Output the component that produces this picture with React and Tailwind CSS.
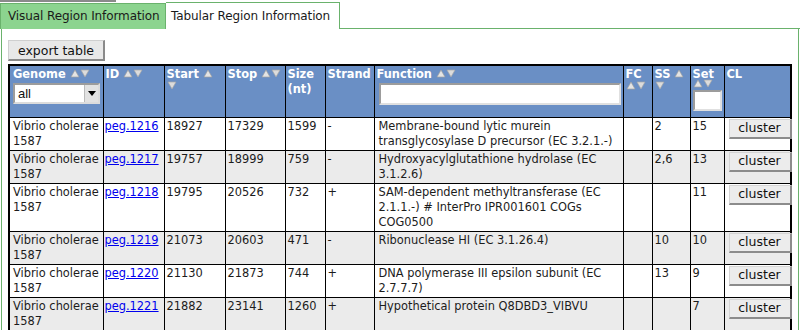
import React from 'react';

const rows = [
  { id: 'peg.1216', start: '18927', stop: '17329', size: '1599', strand: '-', fn: 'Membrane-bound lytic murein transglycosylase D precursor (EC 3.2.1.-)', fc: '', ss: '2', set: '15' },
  { id: 'peg.1217', start: '19757', stop: '18999', size: '759', strand: '-', fn: 'Hydroxyacylglutathione hydrolase (EC 3.1.2.6)', fc: '', ss: '2,6', set: '13' },
  { id: 'peg.1218', start: '19795', stop: '20526', size: '732', strand: '+', fn: 'SAM-dependent methyltransferase (EC 2.1.1.-) # InterPro IPR001601 COGs COG0500', fc: '', ss: '', set: '11' },
  { id: 'peg.1219', start: '21073', stop: '20603', size: '471', strand: '-', fn: 'Ribonuclease HI (EC 3.1.26.4)', fc: '', ss: '10', set: '10' },
  { id: 'peg.1220', start: '21130', stop: '21873', size: '744', strand: '+', fn: 'DNA polymerase III epsilon subunit (EC 2.7.7.7)', fc: '', ss: '13', set: '9' },
  { id: 'peg.1221', start: '21882', stop: '23141', size: '1260', strand: '+', fn: 'Hypothetical protein Q8DBD3_VIBVU', fc: '', ss: '', set: '7' },
];

const Up = () => (
  <svg width="10" height="9" viewBox="0 0 10 9" className="inline-block align-baseline">
    <path d="M5 1 L9 8 H1 Z" fill="#e4e4e4" stroke="#a0a0a0" strokeWidth="0.7" />
  </svg>
);

const Down = () => (
  <svg width="10" height="9" viewBox="0 0 10 9" className="inline-block align-baseline">
    <path d="M1 1 H9 L5 8 Z" fill="#dcdcdc" stroke="#a8a8a8" strokeWidth="0.7" />
  </svg>
);

const th = 'border border-black align-top text-left px-[2px] pt-px font-bold text-white';
const td = 'border border-black align-top px-[2px] pt-px pb-px';

export default function App() {
  return (
    <div className="w-[800px] h-[330px] overflow-hidden bg-white text-[11.4px] leading-[15px] text-[#1c1c1c]" style={{ fontFamily: '"DejaVu Sans", Verdana, sans-serif' }}>
      <div className="h-[2px] w-[116px] bg-[#8a8a8a]" />

      {/* tabs */}
      <div className="flex items-end h-[27px] text-[12px]">
        <div className="h-[26px] w-[166px] bg-[#8cd48f] border border-[#6ab26c] border-b-0 pl-[7px] flex items-center text-[#1a1a1a] tracking-[-0.1px]">
          Visual Region Information
        </div>
        <div className="h-[27px] w-[174px] bg-white border border-[#6ab26c] border-b-0 border-l-0 pl-[5px] flex items-center text-[#1a1a1a] tracking-[-0.1px]">
          Tabular Region Information
        </div>
        <div className="flex-1 border-b border-[#6ab26c]" />
      </div>

      <div className="border border-t-0 border-[#6ab26c] mx-px pl-[6px] pt-[11px] h-[310px]">
        <button className="h-[21px] w-[97px] bg-[#e8e8e8] border border-[#cfcfcf] border-r-[#8a8a8a] border-b-[#8a8a8a] border-r-2 border-b-2 text-[12.5px] text-[#111]">
          export table
        </button>

        <table className="mt-[3px] border-collapse table-fixed w-[782px] border-2 border-black">
          <colgroup>
            <col className="w-[94px]" />
            <col className="w-[61px]" />
            <col className="w-[61px]" />
            <col className="w-[60px]" />
            <col className="w-[40px]" />
            <col className="w-[49px]" />
            <col className="w-[249px]" />
            <col className="w-[29px]" />
            <col className="w-[38px]" />
            <col className="w-[34px]" />
            <col className="w-[67px]" />
          </colgroup>
          <thead>
            <tr className="bg-[#6a8fc5] h-[52px]">
              <th className={`${th} pl-[3px]`}>
                <div>Genome <Up /><Down /></div>
                <div className="mt-px h-[21px] w-[87px] flex border-2 border-[#9c9c9c] border-r-[#dcdcdc] border-b-[#dcdcdc] bg-white">
                  <span className="flex-1 pl-[3px] text-[13px] leading-[17px] font-normal text-[#111]" style={{ fontFamily: '"Liberation Sans", Arial, sans-serif' }}>all</span>
                  <span className="w-[14px] bg-[#e2e2e2] border-l border-[#bbb] flex items-center justify-center">
                    <svg width="8" height="5" viewBox="0 0 8 5"><path d="M0 0 H8 L4 5 Z" fill="#000" /></svg>
                  </span>
                </div>
              </th>
              <th className={th}>ID <Up /><Down /></th>
              <th className={th}>
                <div>Start <Up /></div>
                <div className="-mt-[3px]"><Down /></div>
              </th>
              <th className={th}>Stop <Up /><Down /></th>
              <th className={th}>Size (nt)</th>
              <th className={th}>Strand</th>
              <th className={th}>
                <div>Function <Up /><Down /></div>
                <div className="mt-px ml-[2px] h-[22px] w-[242px] bg-white border-2 border-[#9c9c9c] border-r-[#e0e0e0] border-b-[#e0e0e0]" />
              </th>
              <th className={th}>
                <div>FC</div>
                <div className="-mt-[3px]"><Up /><Down /></div>
              </th>
              <th className={th}>
                <div>SS <Up /></div>
                <div className="-mt-[3px]"><Down /></div>
              </th>
              <th className={th}>
                <div>Set</div>
                <div className="-mt-[3px] leading-[11px]"><Up /><Down /></div>
                <div className="h-[21px] w-[29px] bg-white border-2 border-[#9c9c9c] border-r-[#e0e0e0] border-b-[#e0e0e0]" />
              </th>
              <th className={th}>CL</th>
            </tr>
          </thead>
          <tbody>
            {rows.map((r, i) => (
              <tr key={r.id} className={i % 2 ? 'bg-[#ebebeb]' : 'bg-white'}>
                <td className={`${td} pl-[3px]`}>Vibrio cholerae 1587</td>
                <td className={`${td} px-px`}>
                  <a href="#" className="text-[#0000ee] underline">{r.id}</a>
                </td>
                <td className={td}>{r.start}</td>
                <td className={td}>{r.stop}</td>
                <td className={td}>{r.size}</td>
                <td className={td}>{r.strand}</td>
                <td className={`${td} pl-[4px] pr-0`}>{r.fn}</td>
                <td className={td}>{r.fc}</td>
                <td className={td}>{r.ss}</td>
                <td className={td}>{r.set}</td>
                <td className={`${td} pl-[4px] pr-0 pt-[3px]`}>
                  <button className="h-[20px] w-[63px] bg-[#ececec] border border-[#d4d4d4] border-r-2 border-b-2 border-r-[#8c8c8c] border-b-[#8c8c8c] text-[12.5px] leading-[16px] text-[#111]">
                    cluster
                  </button>
                </td>
              </tr>
            ))}
          </tbody>
        </table>
      </div>
    </div>
  );
}
